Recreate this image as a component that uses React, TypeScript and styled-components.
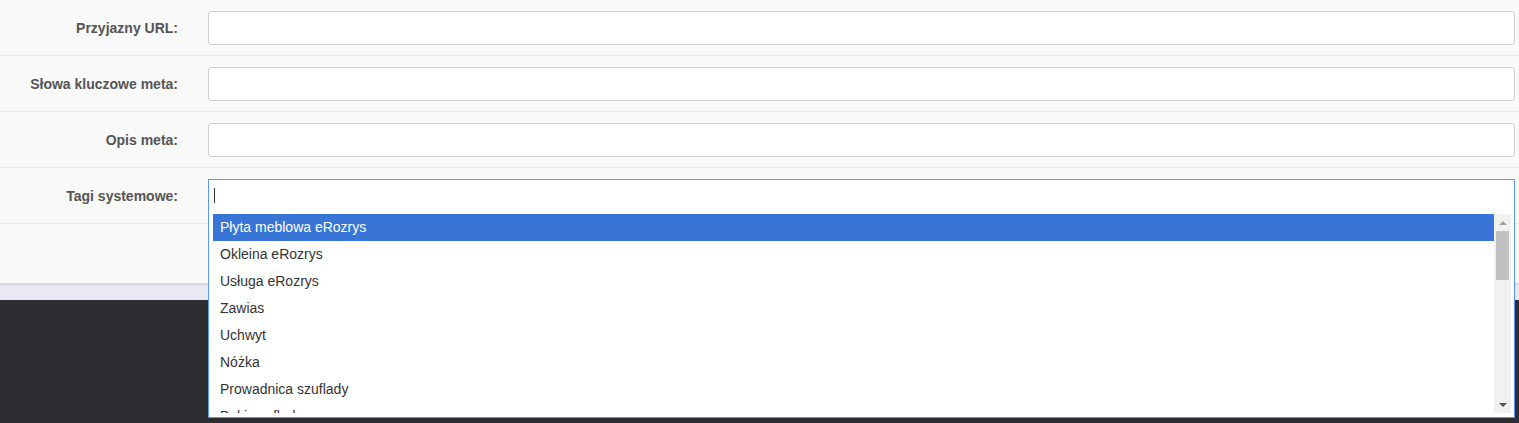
import React from "react";
import styled, { createGlobalStyle } from "styled-components";

const GlobalStyle = createGlobalStyle`
  html, body {
    margin: 0;
    padding: 0;
    background: #2e2d31;
    font-family: "Liberation Sans", Arial, sans-serif;
  }
  * { box-sizing: border-box; }
`;

const Page = styled.div`
  display: flex;
  flex-direction: column;
  min-height: 423px;
`;

const Panel = styled.div`
  background: #f9f9f9;
  border-bottom: 1px solid #d9d9d9;
  box-shadow: 0 1px 2px rgba(0, 0, 0, 0.08);
  position: relative;
  z-index: 1;
`;

const Band = styled.div`
  height: 16px;
  background: #eae9f3;
`;

const Footer = styled.div`
  flex: 1;
  background: #2e2d31;
`;

const Row = styled.div`
  display: grid;
  grid-template-columns: 178px 1fr;
  column-gap: 30px;
  align-items: center;
  padding: 11px 4px 10px 0;
  border-bottom: 1px solid #e8e8e8;
`;

const Label = styled.label`
  text-align: right;
  font-weight: bold;
  font-size: 14px;
  color: #555;
`;

const TextInput = styled.div`
  height: 34px;
  background: #fff;
  border: 1px solid #cfcfcf;
  border-radius: 3px;
`;

const Actions = styled.div`
  height: 59px;
`;

const ChosenAnchor = styled.div`
  position: relative;
  height: 34px;
`;

const Chosen = styled.div`
  position: absolute;
  top: 0;
  left: 0;
  right: 0;
  z-index: 5;
  background: #fff;
  border: 1px solid #5897fb;
  display: flex;
  flex-direction: column;
  padding-bottom: 4px;
`;

const Search = styled.div`
  height: 34px;
  padding: 8px 0 0 5px;
`;

const Caret = styled.span`
  display: block;
  width: 1px;
  height: 15px;
  background: #333;
`;

const Results = styled.div`
  display: flex;
  height: 199px;
  padding-left: 4px;
  padding-right: 3px;
`;

const ItemList = styled.ul`
  flex: 1;
  margin: 0;
  padding: 0;
  list-style: none;
  overflow: hidden;
`;

const Item = styled.li<{ $active?: boolean }>`
  height: 27px;
  line-height: 27px;
  padding-left: 7px;
  font-size: 14px;
  white-space: nowrap;
  color: ${(p) => (p.$active ? "#fff" : "#333")};
  background: ${(p) => (p.$active ? "#3875d7" : "transparent")};
`;

const Scrollbar = styled.div`
  width: 17px;
  background: #f1f1f1;
  display: flex;
  flex-direction: column;
`;

const ArrowButton = styled.div<{ $dir: "up" | "down"; $color: string }>`
  height: 17px;
  display: flex;
  align-items: center;
  justify-content: center;
  &::before {
    content: "";
    width: 0;
    height: 0;
    border-left: 4px solid transparent;
    border-right: 4px solid transparent;
    ${(p) =>
      p.$dir === "up"
        ? `border-bottom: 4px solid ${p.$color};`
        : `border-top: 4px solid ${p.$color};`}
  }
`;

const Thumb = styled.div`
  height: 49px;
  margin: 0 2px;
  background: #c1c1c1;
`;

const Track = styled.div`
  flex: 1;
`;

const items = [
  "Płyta meblowa eRozrys",
  "Okleina eRozrys",
  "Usługa eRozrys",
  "Zawias",
  "Uchwyt",
  "Nóżka",
  "Prowadnica szuflady",
  "Boki szuflady",
];

const fields = ["Przyjazny URL:", "Słowa kluczowe meta:", "Opis meta:"];

export default function App() {
  return (
    <Page>
      <GlobalStyle />
      <Panel>
        {fields.map((f) => (
          <Row key={f}>
            <Label>{f}</Label>
            <TextInput />
          </Row>
        ))}
        <Row>
          <Label>Tagi systemowe:</Label>
          <ChosenAnchor>
            <Chosen>
              <Search>
                <Caret />
              </Search>
              <Results>
                <ItemList>
                  {items.map((it, i) => (
                    <Item key={it} $active={i === 0}>
                      {it}
                    </Item>
                  ))}
                </ItemList>
                <Scrollbar>
                  <ArrowButton $dir="up" $color="#a3a3a3" />
                  <Thumb />
                  <Track />
                  <ArrowButton $dir="down" $color="#505050" />
                </Scrollbar>
              </Results>
            </Chosen>
          </ChosenAnchor>
        </Row>
        <Actions />
      </Panel>
      <Band />
      <Footer />
    </Page>
  );
}
